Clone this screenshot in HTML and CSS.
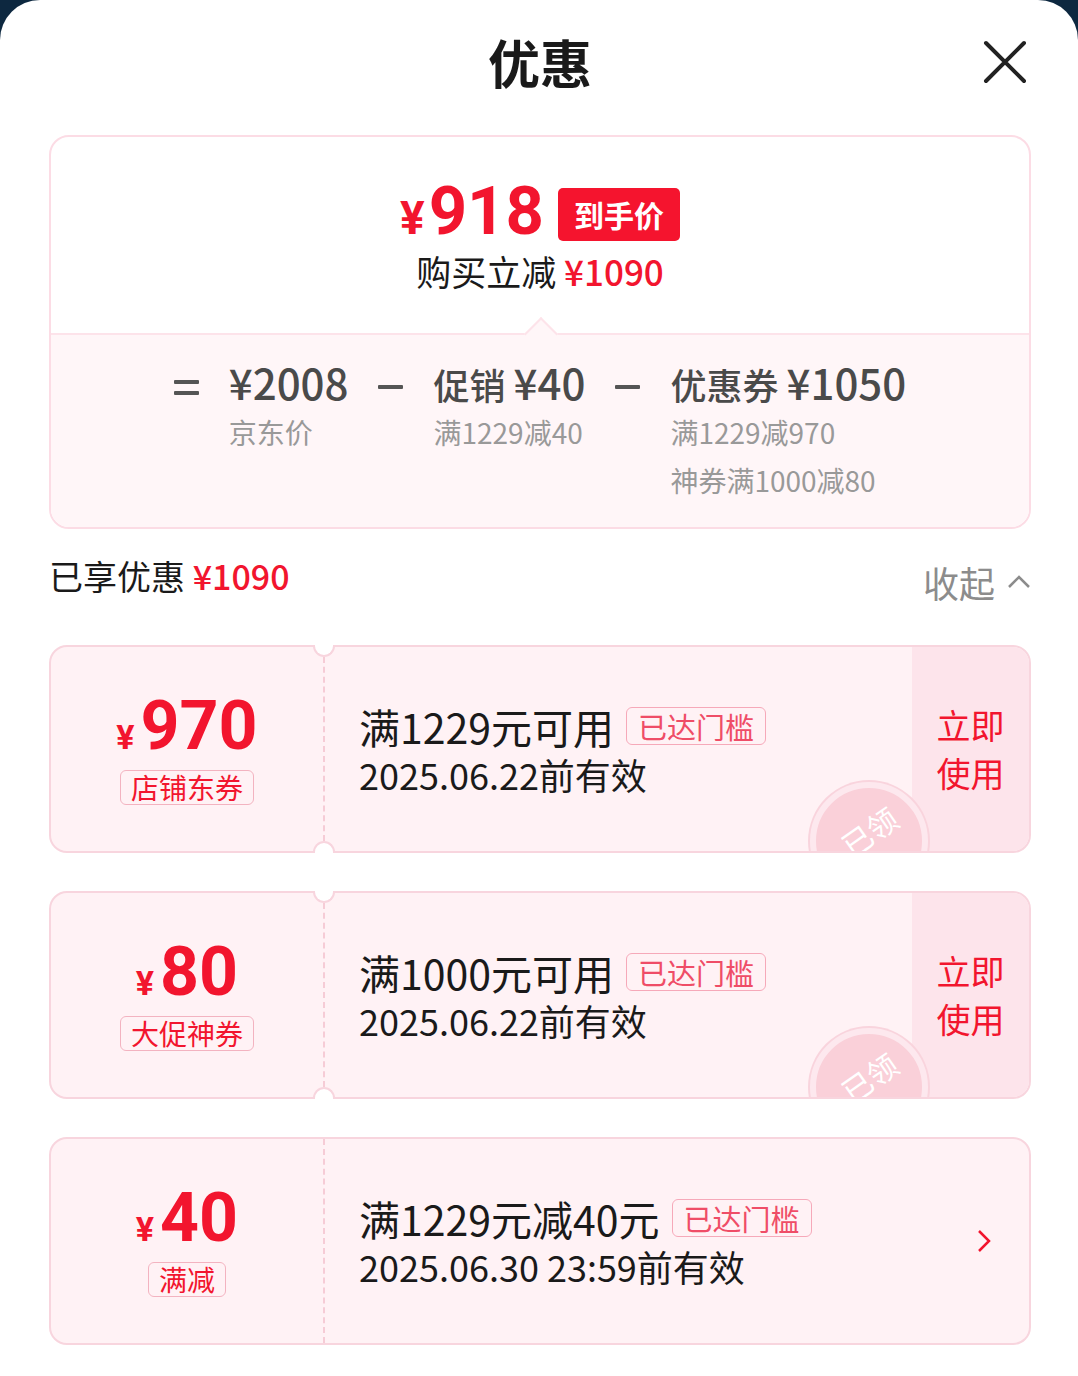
FILE: index.html
```html
<!DOCTYPE html>
<html lang="zh-CN">
<head>
    <meta charset="UTF-8">
    <meta name="viewport" content="width=device-width, initial-scale=1.0">
    <title>优惠</title>
    <link rel="stylesheet" href="styles.css">
</head>
<body>

<div class="sheet">
    <header class="head">
        <h1 class="title">优惠</h1>
        <button class="close" type="button" aria-label="关闭">
            <svg width="44" height="44" viewBox="0 0 44 44"><path d="M3 3 L41 41 M41 3 L3 41" stroke="#222" stroke-width="4" stroke-linecap="round"/></svg>
        </button>
    </header>

    <section class="summary">
        <div class="summary-top">
            <div class="final">
                <span class="final-price"><span class="yen">¥</span>918</span>
                <span class="final-badge">到手价</span>
            </div>
            <div class="instant">购买立减 <span class="red">¥1090</span></div>
        </div>
        <div class="summary-calc">
            <span class="arrow"></span>
            <div class="op"><i></i><i></i></div>
            <div class="term">
                <div class="term-head"><span class="num">¥2008</span></div>
                <div class="term-sub">京东价</div>
            </div>
            <div class="op"><i></i></div>
            <div class="term">
                <div class="term-head">促销 <span class="num">¥40</span></div>
                <div class="term-sub">满1229减40</div>
            </div>
            <div class="op"><i></i></div>
            <div class="term">
                <div class="term-head">优惠券 <span class="num">¥1050</span></div>
                <div class="term-sub">满1229减970</div>
                <div class="term-sub">神券满1000减80</div>
            </div>
        </div>
    </section>

    <div class="enjoyed">
        <div class="enjoyed-total">已享优惠 <span class="red">¥1090</span></div>
        <div class="fold">收起
            <svg width="24" height="14" viewBox="0 0 24 14"><polyline points="2,12 12,2 22,12" fill="none" stroke="#8c8c8c" stroke-width="2.5"/></svg>
        </div>
    </div>

    <div class="coupons">
        <div class="coupon">
            <div class="coupon-inner">
                <div class="cp-left">
                    <div class="cp-price"><span class="yen">¥</span>970</div>
                    <span class="cp-type">店铺东券</span>
                </div>
                <div class="cp-main">
                    <div class="cp-title">满1229元可用 <span class="cp-tag">已达门槛</span></div>
                    <div class="cp-date">2025.06.22前有效</div>
                </div>
                <div class="cp-action">立即<br>使用</div>
                <div class="stamp"><span>已领</span></div>
            </div>
            <i class="notch notch-top"></i>
            <i class="notch notch-bottom"></i>
        </div>

        <div class="coupon">
            <div class="coupon-inner">
                <div class="cp-left">
                    <div class="cp-price"><span class="yen">¥</span>80</div>
                    <span class="cp-type">大促神券</span>
                </div>
                <div class="cp-main">
                    <div class="cp-title">满1000元可用 <span class="cp-tag">已达门槛</span></div>
                    <div class="cp-date">2025.06.22前有效</div>
                </div>
                <div class="cp-action">立即<br>使用</div>
                <div class="stamp"><span>已领</span></div>
            </div>
            <i class="notch notch-top"></i>
            <i class="notch notch-bottom"></i>
        </div>

        <div class="coupon">
            <div class="coupon-inner">
                <div class="cp-left">
                    <div class="cp-price"><span class="yen">¥</span>40</div>
                    <span class="cp-type">满减</span>
                </div>
                <div class="cp-main">
                    <div class="cp-title">满1229元减40元 <span class="cp-tag">已达门槛</span></div>
                    <div class="cp-date">2025.06.30 23:59前有效</div>
                </div>
                <div class="cp-more">
                    <svg width="14" height="24" viewBox="0 0 14 24"><polyline points="2,2 12,12 2,22" fill="none" stroke="#f2152e" stroke-width="2.5"/></svg>
                </div>
            </div>
        </div>
    </div>
</div>

</body>
</html>
```

FILE: styles.css
```css
body { margin: 0; background: #0d2840; font-family: "Noto Sans CJK SC", "Noto Sans", sans-serif; color: #1a1a1a; }
.red { color: #f2152e; font-weight: 500; }

.sheet { background: #fff; border-radius: 40px 40px 0 0; min-height: 1376px; padding: 0 47px 30px 49px; box-sizing: border-box; }

/* header */
.head { height: 124px; display: grid; grid-template-columns: 1fr auto 1fr; align-items: center; }
.title { grid-column: 2; margin: 0; font-size: 52px; font-weight: 700; line-height: 1; }
.close { grid-column: 3; justify-self: end; margin-right: 4px; width: 44px; height: 44px; padding: 0; border: 0; background: none; }

/* price summary */
.summary { margin-top: 11px; border: 2px solid #fcdce5; border-radius: 20px; overflow: hidden; }
.summary-top { height: 196px; box-sizing: border-box; padding-top: 47px; display: flex; flex-direction: column; align-items: center; }
.final { display: flex; align-items: center; gap: 14px; height: 60px; }
.final-price { color: #f2152e; font-family: Roboto, sans-serif; font-weight: 700; font-size: 67px; line-height: 60px; }
.final-price .yen { font-size: 46px; margin-right: 4px; }
.final-badge { background: #f5142e; color: #fff; font-weight: 700; font-size: 30px; height: 53px; line-height: 53px; padding: 0 16px; border-radius: 5px; }
.instant { margin-top: 5px; font-size: 35px; line-height: 44px; }

.summary-calc { position: relative; background: #fff6f8; border-top: 2px solid #fde3ea; padding: 23px 0; display: flex; justify-content: center; align-items: flex-start; gap: 30px; }
.arrow { position: absolute; left: 50%; top: -13px; width: 22px; height: 22px; margin-left: -11px; background: #fff6f8; border-top: 2px solid #fde3ea; border-left: 2px solid #fde3ea; transform: rotate(45deg); }
.op { height: 48px; margin-top: 5px; display: flex; flex-direction: column; justify-content: center; gap: 7px; }
.op i { display: block; width: 25px; height: 4px; background: #555; border-radius: 1px; }
.term-head { font-size: 36px; line-height: 48px; color: #4a4a4a; font-weight: 500; }
.term-head .num { font-size: 42px; }
.term-sub { font-size: 28px; line-height: 48px; color: #999; }

/* enjoyed row */
.enjoyed { margin-top: 16px; height: 60px; display: flex; align-items: center; justify-content: space-between; }
.enjoyed-total { font-size: 34px; }
.fold { padding-top: 14px; font-size: 36px; color: #8c8c8c; display: flex; align-items: center; gap: 12px; }

/* coupons */
.coupons { margin-top: 40px; }
.coupon { position: relative; height: 208px; box-sizing: border-box; border: 2px solid #f8d5de; border-radius: 18px; background: #fff2f5; }
.coupon + .coupon { margin-top: 38px; }
.coupon-inner { position: relative; height: 100%; display: flex; overflow: hidden; border-radius: 16px; }

.cp-left { width: 272px; flex-shrink: 0; display: flex; flex-direction: column; align-items: center; justify-content: center; }
.cp-price { color: #f2152e; font-family: Roboto, sans-serif; font-weight: 700; font-size: 68px; line-height: 64px; }
.cp-price .yen { font-size: 34px; margin-right: 6px; }
.cp-type { margin-top: 1px; font-size: 28px; line-height: 33px; color: #f2152e; border: 1.5px solid #f3b3c0; border-radius: 6px; padding: 0 10px; }

.cp-main { flex: 1; border-left: 2px dashed #f6ccd6; padding-left: 34px; display: flex; flex-direction: column; justify-content: center; }
.cp-title { font-size: 41px; line-height: 50px; display: flex; align-items: center; gap: 12px; }
.cp-tag { font-size: 29px; line-height: 36px; color: #ef4d67; border: 1.5px solid #f6a9b9; border-radius: 6px; padding: 0 11px; }
.cp-date { font-size: 36px; line-height: 46px; }

.cp-action { width: 117px; flex-shrink: 0; background: #fde4eb; color: #f2152e; font-size: 34px; line-height: 48px; display: flex; align-items: center; justify-content: center; text-align: center; }
.cp-more { width: 90px; display: flex; align-items: center; justify-content: center; }

.stamp { position: absolute; left: 759px; top: 135px; width: 118px; height: 118px; box-sizing: border-box; border-radius: 50%; background: #fad0d9; border: 6px solid #fde8ee; box-shadow: 0 0 0 2px #f9d4dd; display: flex; align-items: center; justify-content: center; }
.stamp span { color: #fff; font-size: 30px; transform: translateY(-10px) rotate(-35deg); }

.notch { position: absolute; left: 262px; width: 22px; height: 12px; box-sizing: border-box; background: #fff; border: 2px solid #f8d5de; }
.notch-top { top: -2px; border-top: 0; border-radius: 0 0 11px 11px; }
.notch-bottom { bottom: -2px; border-bottom: 0; border-radius: 11px 11px 0 0; }
```
